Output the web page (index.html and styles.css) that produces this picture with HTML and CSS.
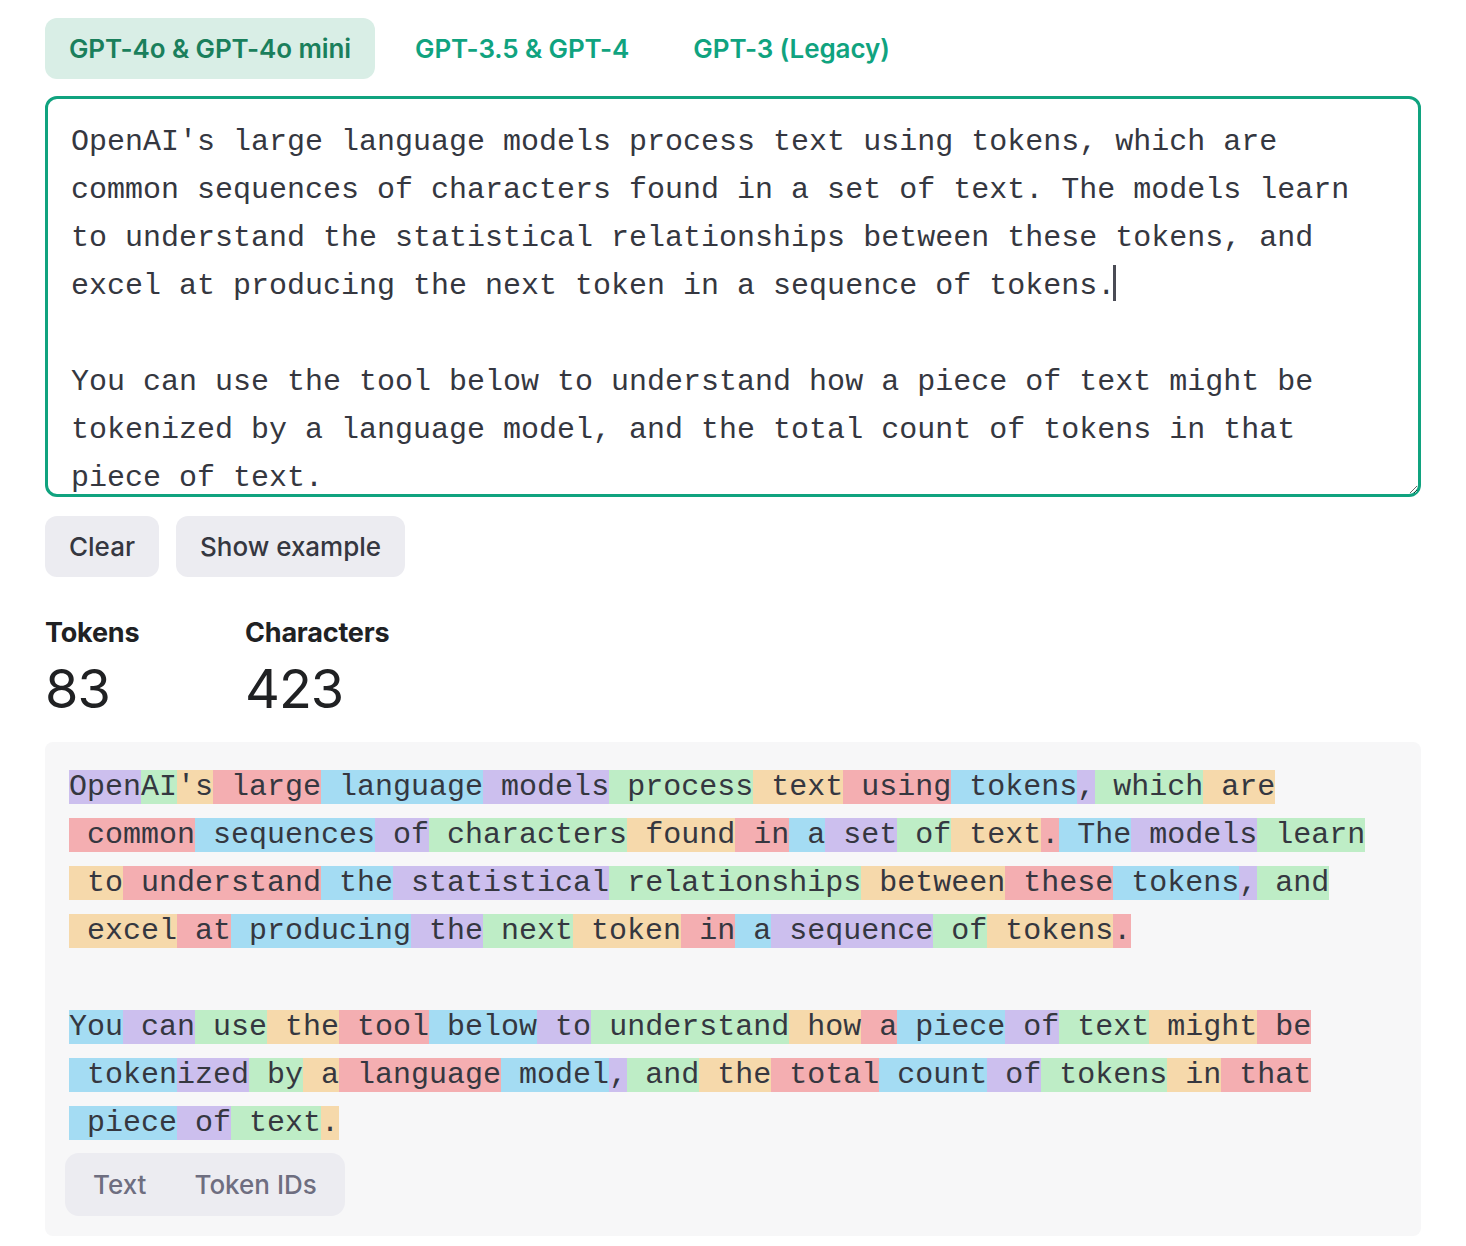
FILE: index.html
```html
<!DOCTYPE html>
<html lang="en">
<head>
<meta charset="utf-8">
<title>Tokenizer</title>
<link rel="stylesheet" href="styles.css">
</head>
<body>
<main class="page">
  <nav class="tabs">
    <button class="tab tab-active">GPT-4o &amp; GPT-4o mini</button>
    <button class="tab">GPT-3.5 &amp; GPT-4</button>
    <button class="tab">GPT-3 (Legacy)</button>
  </nav>

  <div class="editor">
    <textarea class="input" spellcheck="false">OpenAI's large language models process text using tokens, which are common sequences of characters found in a set of text. The models learn to understand the statistical relationships between these tokens, and excel at producing the next token in a sequence of tokens.

You can use the tool below to understand how a piece of text might be tokenized by a language model, and the total count of tokens in that piece of text.</textarea>
    <span class="caret"></span>
  </div>

  <div class="actions">
    <button class="btn">Clear</button>
    <button class="btn">Show example</button>
  </div>

  <div class="stats">
    <div class="stat">
      <div class="stat-label">Tokens</div>
      <div class="stat-value">83</div>
    </div>
    <div class="stat">
      <div class="stat-label">Characters</div>
      <div class="stat-value">423</div>
    </div>
  </div>

  <section class="panel">
    <div class="tokens">
      <div class="line"><span class="t1">Open</span><span class="t2">AI</span><span class="t3">'s</span><span class="t4"> large</span><span class="t5"> language</span><span class="t1"> models</span><span class="t2"> process</span><span class="t3"> text</span><span class="t4"> using</span><span class="t5"> tokens</span><span class="t1">,</span><span class="t2"> which</span><span class="t3"> are</span></div>
      <div class="line"><span class="t4"> common</span><span class="t5"> sequences</span><span class="t1"> of</span><span class="t2"> characters</span><span class="t3"> found</span><span class="t4"> in</span><span class="t5"> a</span><span class="t1"> set</span><span class="t2"> of</span><span class="t3"> text</span><span class="t4">.</span><span class="t5"> The</span><span class="t1"> models</span><span class="t2"> learn</span></div>
      <div class="line"><span class="t3"> to</span><span class="t4"> understand</span><span class="t5"> the</span><span class="t1"> statistical</span><span class="t2"> relationships</span><span class="t3"> between</span><span class="t4"> these</span><span class="t5"> tokens</span><span class="t1">,</span><span class="t2"> and</span></div>
      <div class="line"><span class="t3"> excel</span><span class="t4"> at</span><span class="t5"> producing</span><span class="t1"> the</span><span class="t2"> next</span><span class="t3"> token</span><span class="t4"> in</span><span class="t5"> a</span><span class="t1"> sequence</span><span class="t2"> of</span><span class="t3"> tokens</span><span class="t4">.</span></div>
      <div class="line"> </div>
      <div class="line"><span class="t5">You</span><span class="t1"> can</span><span class="t2"> use</span><span class="t3"> the</span><span class="t4"> tool</span><span class="t5"> below</span><span class="t1"> to</span><span class="t2"> understand</span><span class="t3"> how</span><span class="t4"> a</span><span class="t5"> piece</span><span class="t1"> of</span><span class="t2"> text</span><span class="t3"> might</span><span class="t4"> be</span></div>
      <div class="line"><span class="t5"> token</span><span class="t1">ized</span><span class="t2"> by</span><span class="t3"> a</span><span class="t4"> language</span><span class="t5"> model</span><span class="t1">,</span><span class="t2"> and</span><span class="t3"> the</span><span class="t4"> total</span><span class="t5"> count</span><span class="t1"> of</span><span class="t2"> tokens</span><span class="t3"> in</span><span class="t4"> that</span></div>
      <div class="line"><span class="t5"> piece</span><span class="t1"> of</span><span class="t2"> text</span><span class="t3">.</span></div>
    </div>
    <div class="toggle">
      <button class="toggle-opt">Text</button>
      <button class="toggle-opt">Token IDs</button>
    </div>
  </section>
</main>
</body>
</html>
```

FILE: styles.css
```css
* {
  box-sizing: border-box;
}

html, body {
  margin: 0;
  background: #ffffff;
}

body {
  font-family: "Inter", "Noto Sans", sans-serif;
  color: #202123;
}

.page {
  width: 1376px;
  margin-left: 45px;
  padding-top: 18px;
  display: flex;
  flex-direction: column;
}

button {
  font-family: inherit;
  border: 0;
  cursor: pointer;
}

/* Tabs */
.tabs {
  display: flex;
  gap: 16px;
}

.tab {
  height: 61px;
  padding: 0 24px;
  border-radius: 12px;
  background: transparent;
  color: #10a37f;
  font-size: 26px;
  font-weight: 600;
  letter-spacing: -0.1px;
}

.tab-active {
  background: #d9eee6;
  color: #1a7f5c;
}

/* Editor */
.editor {
  position: relative;
  margin-top: 17px;
}

.input {
  display: block;
  width: 1376px;
  height: 401px;
  margin: 0;
  padding: 19px 23px 19px 23px;
  border: 3px solid #10a37f;
  border-radius: 12px;
  outline: none;
  resize: vertical;
  overflow: hidden;
  font-family: "Liberation Mono", "DejaVu Sans Mono", monospace;
  font-size: 30px;
  line-height: 48px;
  color: #353740;
  background: #ffffff;
}

.caret {
  position: absolute;
  left: 1068px;
  top: 169px;
  width: 3px;
  height: 36px;
  background: #4a4b55;
}

/* Action buttons */
.actions {
  display: flex;
  gap: 17px;
  margin-top: 19px;
}

.btn {
  height: 61px;
  padding: 0 24px;
  border-radius: 12px;
  background: #ececf1;
  color: #353740;
  font-size: 26px;
  font-weight: 500;
  letter-spacing: 0;
}

/* Stats */
.stats {
  display: grid;
  grid-template-columns: 200px auto;
  margin-top: 40px;
}

.stat-label {
  font-size: 27px;
  font-weight: 700;
  letter-spacing: -0.2px;
  line-height: 32px;
  color: #202123;
}

.stat-value {
  margin-top: 8px;
  font-size: 54px;
  font-weight: 400;
  letter-spacing: -1px;
  line-height: 64px;
  color: #202123;
}

/* Token panel */
.panel {
  margin-top: 21px;
  background: #f7f7f8;
  border-radius: 8px;
  padding: 21px 24px 19px 24px;
  height: 494px;
}

.tokens {
  font-family: "Liberation Mono", "DejaVu Sans Mono", monospace;
  font-size: 30px;
  line-height: 48px;
  color: #353740;
}

.line {
  white-space: pre;
  height: 48px;
}

.t1 { background: rgba(107, 64, 216, 0.3); }
.t2 { background: rgba(104, 222, 122, 0.4); }
.t3 { background: rgba(244, 172, 54, 0.4); }
.t4 { background: rgba(239, 65, 70, 0.4); }
.t5 { background: rgba(39, 181, 234, 0.4); }

.toggle {
  display: inline-flex;
  margin-top: 6px;
  margin-left: -4px;
  padding: 4px;
  border-radius: 14px;
  background: #ececf1;
}

.toggle-opt {
  height: 55px;
  padding: 0 24px;
  border-radius: 10px;
  background: transparent;
  color: #6e6e80;
  font-size: 26px;
  font-weight: 500;
  letter-spacing: 0;
}
```
